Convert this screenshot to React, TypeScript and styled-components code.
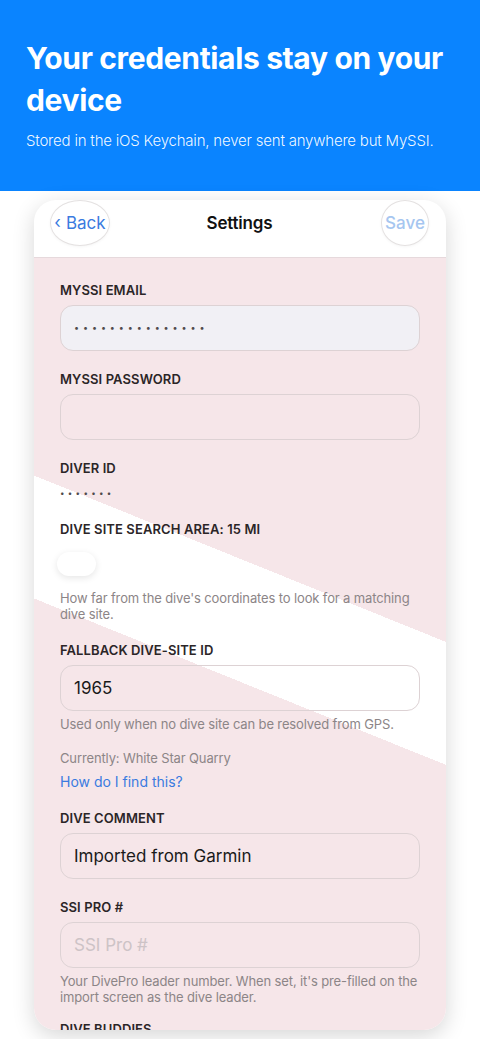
import styled, { createGlobalStyle } from "styled-components";

const GlobalStyle = createGlobalStyle`
  html, body {
    margin: 0;
    padding: 0;
    background: #ffffff;
    font-family: Inter, "Noto Sans", "Liberation Sans", sans-serif;
    -webkit-font-smoothing: antialiased;
  }
  * {
    box-sizing: border-box;
  }
`;

const Page = styled.div`
  width: 480px;
  height: 1039px;
  overflow: hidden;
  background: #ffffff;
`;

const Hero = styled.header`
  background: #0a84ff;
  height: 191px;
  padding: 37px 26px 0 26px;
  color: #ffffff;
`;

const HeroTitle = styled.h1`
  margin: 0;
  font-size: 30px;
  line-height: 42px;
  font-weight: 700;
  letter-spacing: -0.35px;
`;

const HeroSub = styled.p`
  margin: 10px 0 0 0;
  font-size: 15px;
  line-height: 20px;
  font-weight: 300;
  letter-spacing: -0.2px;
  color: rgba(255, 255, 255, 0.95);
`;

const Stage = styled.div`
  padding: 9px 34px 0 34px;
`;

const Phone = styled.div`
  height: 830px;
  border-radius: 22px;
  overflow: hidden;
  background: #ffffff;
  box-shadow: 0 6px 22px rgba(0, 0, 0, 0.16);
  display: flex;
  flex-direction: column;
`;

const NavBar = styled.div`
  height: 58px;
  flex-shrink: 0;
  display: grid;
  grid-template-columns: 1fr auto 1fr;
  align-items: center;
  padding: 0 17px 11px 16px;
  border-bottom: 1px solid #e6d9dc;
`;

const NavButton = styled.button<{ dim?: boolean; w: number }>`
  width: ${(p) => p.w}px;
  height: 46px;
  border-radius: 50%;
  border: 1px solid #e4e1e1;
  background: #ffffff;
  color: ${(p) => (p.dim ? "#a6c6f0" : "#3a7be0")};
  font-family: inherit;
  font-size: 17px;
  font-weight: ${(p) => (p.dim ? 500 : 400)};
  display: flex;
  align-items: center;
  justify-content: center;
  gap: 5px;
  padding: 0;
  justify-self: ${(p) => (p.dim ? "end" : "start")};
  box-shadow: 0 1px 3px rgba(0, 0, 0, 0.04);
`;

const Chevron = styled.span`
  font-size: 17px;
  line-height: 1;
  margin-top: -2px;
`;

const NavTitle = styled.div`
  font-size: 17px;
  font-weight: 600;
  color: #111111;
  letter-spacing: -0.2px;
`;

const Content = styled.div`
  flex: 1;
  min-height: 0;
  overflow: hidden;
  padding: 24px 26px 0 26px;
  display: flex;
  flex-direction: column;
  gap: 20px;
  background: linear-gradient(
    202deg,
    #f6e6e9 0 356px,
    #ffffff 356px 470px,
    #f6e6e9 470px
  );
`;

const Field = styled.section<{ tight?: boolean }>`
  display: flex;
  flex-direction: column;
  flex-shrink: 0;
  margin-top: ${(p) => (p.tight ? -4 : 0)}px;
`;

const Label = styled.div`
  font-size: 13px;
  line-height: 16px;
  font-weight: 600;
  color: #2b2527;
  text-transform: uppercase;
  letter-spacing: 0.1px;
  margin-bottom: 7px;
`;

const Input = styled.div<{ filled?: boolean; placeholder?: boolean }>`
  height: 46px;
  border-radius: 13px;
  border: 1px solid #ddd2d4;
  background: ${(p) => (p.filled ? "#f1f0f5" : "transparent")};
  padding: 0 13px;
  display: flex;
  align-items: center;
  font-size: 17px;
  color: ${(p) => (p.placeholder ? "#cdc3c6" : "#1a1a1a")};
`;

const Dots = styled.span<{ size: number; spacing: number }>`
  font-size: ${(p) => p.size}px;
  letter-spacing: ${(p) => p.spacing}px;
  color: #4f4a4c;
  line-height: 16px;
`;

const Toggle = styled.div`
  width: 39px;
  height: 24px;
  border-radius: 12px;
  background: #ffffff;
  box-shadow: 0 2px 7px rgba(0, 0, 0, 0.1);
  margin: 8px 0 15px -3px;
`;

const Help = styled.p<{ top?: number }>`
  margin: ${(p) => p.top ?? 6}px 0 0 0;
  font-size: 13px;
  line-height: 15.5px;
  letter-spacing: -0.13px;
  color: #8c8587;
`;

const Link = styled.a`
  margin-top: 8px;
  font-size: 14px;
  line-height: 16px;
  color: #3a7be0;
  text-decoration: none;
`;

export default function App() {
  return (
    <Page>
      <GlobalStyle />
      <Hero>
        <HeroTitle>Your credentials stay on your device</HeroTitle>
        <HeroSub>Stored in the iOS Keychain, never sent anywhere but MySSI.</HeroSub>
      </Hero>
      <Stage>
        <Phone>
          <NavBar>
            <NavButton w={60}>
              <Chevron>‹</Chevron>Back
            </NavButton>
            <NavTitle>Settings</NavTitle>
            <NavButton w={48} dim>
              Save
            </NavButton>
          </NavBar>
          <Content>
            <Field>
              <Label>MySSI Email</Label>
              <Input filled>
                <Dots size={9} spacing={3.9}>
                  •••••••••••••••
                </Dots>
              </Input>
            </Field>
            <Field>
              <Label>MySSI Password</Label>
              <Input />
            </Field>
            <Field>
              <Label>Diver ID</Label>
              <Dots size={8} spacing={3.3} style={{ marginTop: 2 }}>
                •••••••
              </Dots>
            </Field>
            <Field>
              <Label>Dive site search area: 15 mi</Label>
              <Toggle />
              <Help top={0}>
                How far from the dive's coordinates to look for a matching dive
                site.
              </Help>
            </Field>
            <Field>
              <Label>Fallback dive-site ID</Label>
              <Input>1965</Input>
              <Help>Used only when no dive site can be resolved from GPS.</Help>
              <Help top={18}>Currently: White Star Quarry</Help>
              <Link>How do I find this?</Link>
            </Field>
            <Field>
              <Label>Dive comment</Label>
              <Input>Imported from Garmin</Input>
            </Field>
            <Field>
              <Label>SSI Pro #</Label>
              <Input placeholder>SSI Pro #</Input>
              <Help>
                Your DivePro leader number. When set, it's pre-filled on the
                import screen as the dive leader.
              </Help>
            </Field>
            <Field tight>
              <Label>Dive buddies</Label>
            </Field>
          </Content>
        </Phone>
      </Stage>
    </Page>
  );
}
